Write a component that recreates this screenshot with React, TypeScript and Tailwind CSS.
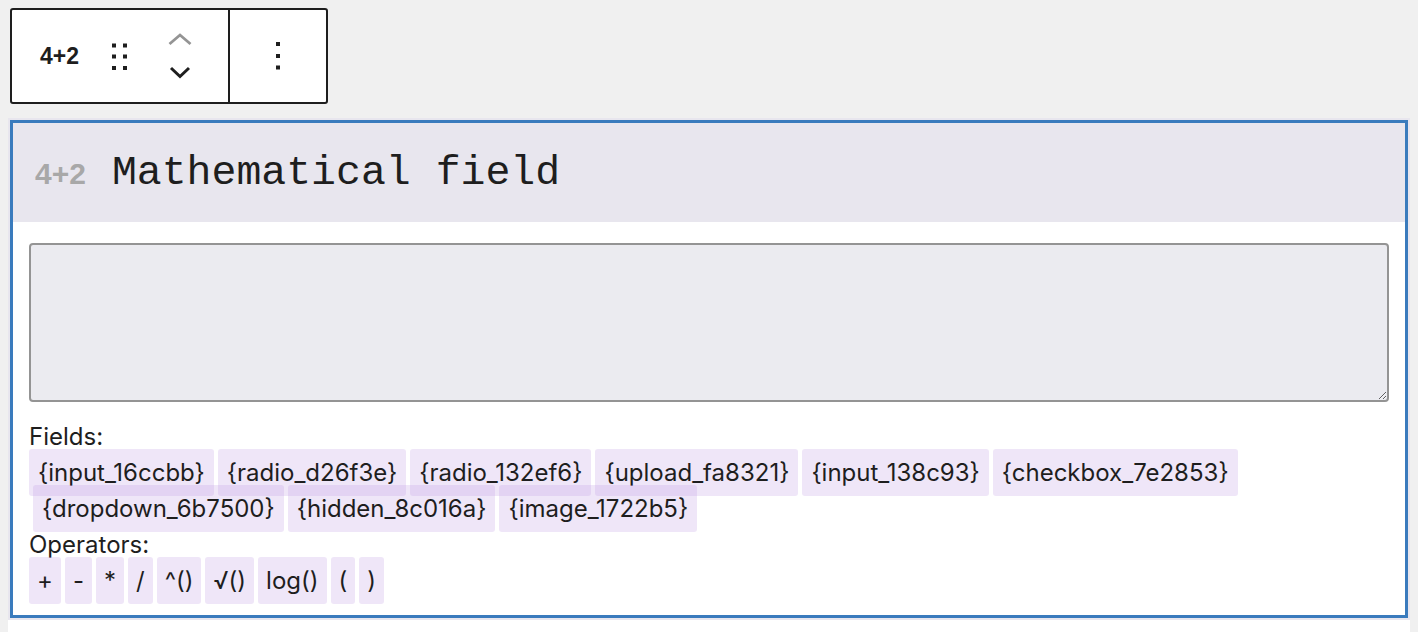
import React from "react";

const fields = [
  "{input_16ccbb}",
  "{radio_d26f3e}",
  "{radio_132ef6}",
  "{upload_fa8321}",
  "{input_138c93}",
  "{checkbox_7e2853}",
];
const fields2 = ["{dropdown_6b7500}", "{hidden_8c016a}", "{image_1722b5}"];
const operators = ["+", "-", "*", "/", "^()", "√()", "log()", "(", ")"];

function Chip({ label, first, tight }: { label: string; first?: boolean; tight?: boolean }) {
  return (
    <span
      className={
        "rounded-[3px] bg-[rgba(191,155,227,0.25)] py-[9px] mr-[4px] " +
        (tight ? "px-[8px] " : "px-[9px] ") +
        (first ? "ml-[4px]" : "")
      }
    >
      {label}
    </span>
  );
}

function Toolbar() {
  return (
    <div className="ml-[10px] inline-flex h-[96px] rounded-[3px] border-2 border-[#1e1e1e] bg-white">
      <div className="flex w-[218px] items-center border-r-2 border-[#1e1e1e]">
        <span className="w-[92px] pl-[28px] font-['Liberation_Sans',sans-serif] text-[23px] font-bold text-[#1e1e1e]">
          4+2
        </span>
        <svg width="32" height="32" viewBox="0 0 32 32" className="mt-[1px]">
          <rect x="8" y="2.5" width="4" height="4" fill="#1e1e1e" />
          <rect x="19" y="2.5" width="4" height="4" fill="#1e1e1e" />
          <rect x="8" y="13.5" width="4" height="4" fill="#1e1e1e" />
          <rect x="19" y="13.5" width="4" height="4" fill="#1e1e1e" />
          <rect x="8" y="25" width="4" height="4" fill="#1e1e1e" />
          <rect x="19" y="25" width="4" height="4" fill="#1e1e1e" />
        </svg>
        <svg width="24" height="48" viewBox="0 0 24 48" className="ml-[32px]">
          <polyline points="1.5,12 12,3 22.5,12" fill="none" stroke="#949494" strokeWidth="2.8" />
          <polyline points="3,36 12,44.5 21,36" fill="none" stroke="#1e1e1e" strokeWidth="3" />
        </svg>
      </div>
      <div className="flex w-[96px] items-center justify-center">
        <svg width="8" height="32" viewBox="0 0 8 32">
          <rect x="2" y="2" width="4" height="4" fill="#1e1e1e" />
          <rect x="2" y="14" width="4" height="4" fill="#1e1e1e" />
          <rect x="2" y="25.5" width="4" height="4" fill="#1e1e1e" />
        </svg>
      </div>
    </div>
  );
}

export default function App() {
  return (
    <div className="min-h-[632px] bg-[#f0f0f0] pt-[8px]">
      <Toolbar />
      <div className="mx-[10px] mt-[16px] border-[3px] border-[#3a7bbd] bg-white outline-2 outline-[#e8e6ee]">
        <div className="flex h-[99px] items-center bg-[#e8e6ee] pl-[22px] pt-[2px]">
          <span className="font-['Liberation_Sans',sans-serif] text-[30px] font-bold text-[#a8a8a8]">
            4+2
          </span>
          <span className="ml-[26px] font-['Liberation_Mono',monospace] text-[41.5px] text-[#1e1e1e]">
            Mathematical field
          </span>
        </div>
        <div className="px-[16px] pt-[21px] pb-[16px] font-['Inter',sans-serif] text-[24px] leading-[36px] text-[#1e1e1e]">
          <textarea className="block h-[159px] w-full rounded-[4px] border-2 border-[#949494] bg-[#ebebf0]" />
          <div className="mt-[17px]">Fields:</div>
          <div>
            {fields.map((f) => (
              <Chip key={f} label={f} />
            ))}
            <br />
            {fields2.map((f, i) => (
              <Chip key={f} label={f} first={i === 0} />
            ))}
          </div>
          <div>Operators:</div>
          <div>
            {operators.map((o) => (
              <Chip key={o} label={o} tight />
            ))}
          </div>
        </div>
      </div>
      <div className="mx-[8px] mt-[2px] h-[20px] bg-white" />
    </div>
  );
}
